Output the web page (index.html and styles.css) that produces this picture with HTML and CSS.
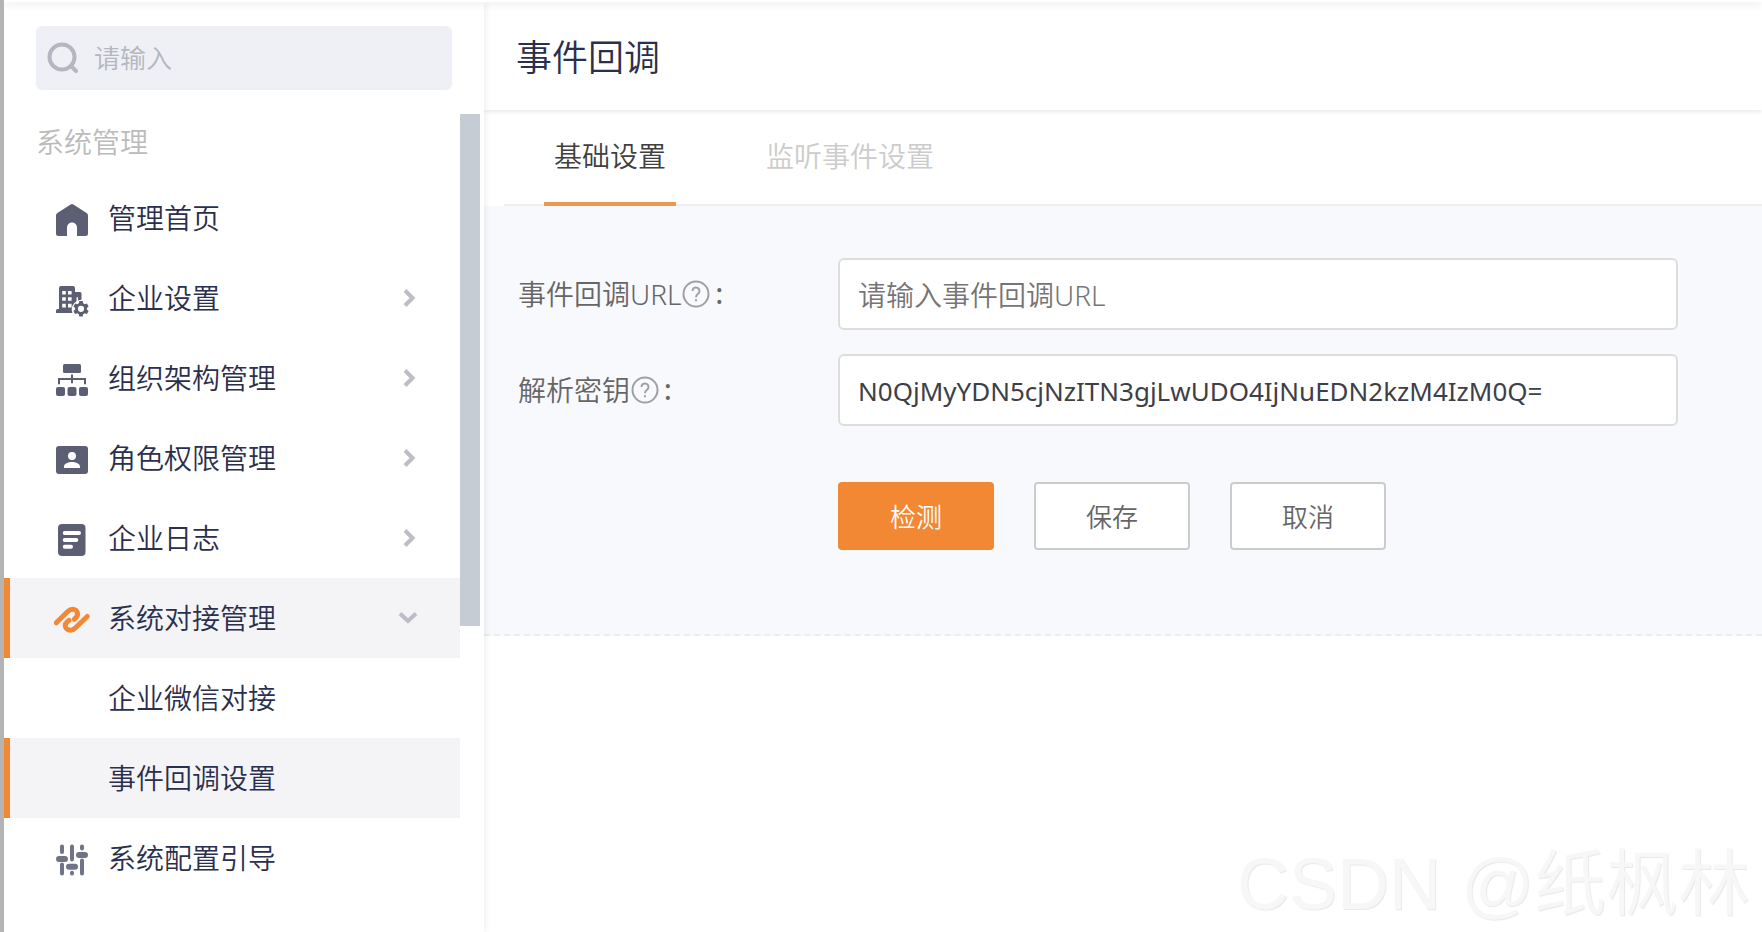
FILE: index.html
```html
<!DOCTYPE html>
<html lang="zh-CN">
<head>
<meta charset="utf-8">
<meta name="viewport" content="width=device-width, initial-scale=1">
<title>事件回调</title>
<link rel="stylesheet" href="styles.css">
</head>
<body>
<div class="topbar"></div>
<div class="layout">
  <aside class="sidebar">
    <label class="search">
      <svg class="search-icon" viewBox="0 0 32 32" aria-hidden="true"><circle cx="15" cy="15" r="12.5"/><path d="M24 24l5 5"/></svg>
      <input class="search-input" type="text" placeholder="请输入" aria-label="搜索">
    </label>
    <div class="nav-scroll">
      <nav class="nav">
        <h2 class="nav-title">系统管理</h2>
        <a class="nav-item" href="#home">
          <svg class="nav-icon" viewBox="0 0 32 32" aria-hidden="true"><path fill-rule="evenodd" d="M14.6.5a2.6 2.6 0 0 1 2.8 0L30.6 9A3 3 0 0 1 32 11.500V29.500A2.500 2.500 0 0 1 29.500 32H21V23.500a5 5 0 0 0-10 0V32H2.500A2.500 2.500 0 0 1 0 29.500V11.500A3 3 0 0 1 1.400 9Z"/></svg>
          <span class="nav-text">管理首页</span>
        </a>
        <a class="nav-item" href="#company">
          <svg class="nav-icon" viewBox="0 0 32 32" aria-hidden="true">
            <path fill-rule="evenodd" d="M5 2H17a2 2 0 0 1 2 2V8h5a1.500 1.500 0 0 1 1.500 1.500V15.800a9 9 0 0 0-3.500.6V13.200H20.500V17.300A9 9 0 0 0 16.500 28.900H0V26.500A1.500 1.500 0 0 1 1.500 25H3V4a2 2 0 0 1 2-2ZM6.200 7v3.600h3.600V7ZM12 7v3.600h3.600V7ZM6.200 13.200v3.600h3.600v-3.600ZM12 13.200v3.600h3.600v-3.600ZM6.200 19.800v3.600h3.600v-3.600ZM12 19.800v3.600h3.600v-3.600Z"/>
            <path fill-rule="evenodd" d="M23.300 18h3.400l.5 2.300 1.500.9 2.200-.7 1.700 2.900-1.700 1.500v1.700l1.700 1.500-1.700 2.900-2.200-.7-1.500.9-.5 2.300h-3.400l-.5-2.300-1.500-.9-2.200.7-1.700-2.900 1.700-1.500v-1.700l-1.700-1.500 1.700-2.900 2.200.7 1.500-.9ZM25 22.700a3.100 3.100 0 1 0 0 6.200a3.100 3.100 0 0 0 0-6.200Z" transform="translate(0 -1)"/>
          </svg>
          <span class="nav-text">企业设置</span>
          <svg class="chevron" viewBox="0 0 20 20" aria-hidden="true"><path d="M5 2.500L12.500 10l-7.500 7.500"/></svg>
        </a>
        <a class="nav-item" href="#org">
          <svg class="nav-icon" viewBox="0 0 32 32" aria-hidden="true">
            <rect x="7" y="0" width="18" height="9" rx="1.500"/>
            <path d="M15 10.500h2V14H30v6.200H28V16H17v3.200H15V16H4v4.200H2V14H15Z"/>
            <rect x="0" y="23" width="9" height="9" rx="2"/><rect x="11.500" y="23" width="9" height="9" rx="2"/><rect x="23" y="23" width="9" height="9" rx="2"/>
          </svg>
          <span class="nav-text">组织架构管理</span>
          <svg class="chevron" viewBox="0 0 20 20" aria-hidden="true"><path d="M5 2.500L12.500 10l-7.500 7.500"/></svg>
        </a>
        <a class="nav-item" href="#roles">
          <svg class="nav-icon" viewBox="0 0 32 32" aria-hidden="true"><path fill-rule="evenodd" d="M3 2H29a3 3 0 0 1 3 3V27a3 3 0 0 1-3 3H3a3 3 0 0 1-3-3V5a3 3 0 0 1 3-3ZM16 8a4 4 0 1 0 0 8a4 4 0 0 0 0-8ZM8 24h16v-1.500c0-3-4.500-4.500-8-4.500s-8 1.500-8 4.500Z"/></svg>
          <span class="nav-text">角色权限管理</span>
          <svg class="chevron" viewBox="0 0 20 20" aria-hidden="true"><path d="M5 2.500L12.500 10l-7.500 7.500"/></svg>
        </a>
        <a class="nav-item" href="#log">
          <svg class="nav-icon" viewBox="0 0 32 32" aria-hidden="true"><rect x="2" y="0" width="27.500" height="32" rx="4"/><path class="icon-lines" d="M8.700 9H23M8.700 16H20.300M8.700 22.800H15"/></svg>
          <span class="nav-text">企业日志</span>
          <svg class="chevron" viewBox="0 0 20 20" aria-hidden="true"><path d="M5 2.500L12.500 10l-7.500 7.500"/></svg>
        </a>
        <a class="nav-item nav-item-active" href="#integration">
          <svg class="nav-icon nav-icon-link" viewBox="0 0 32 32" aria-hidden="true"><path d="M.3 18.800L12 7.300C15.500 4 20.500 5 21.500 9C22.200 12 20.500 13.500 18.300 15.300M31.200 12.500L19.300 24C16 27.500 10.800 26.500 9.500 23C8.500 20 10 18.300 13 16.300"/></svg>
          <span class="nav-text">系统对接管理</span>
          <svg class="chevron" viewBox="0 0 20 20" aria-hidden="true"><path d="M0 5.500L8 13l8-7.500"/></svg>
        </a>
        <a class="nav-item nav-item-sub" href="#wecom"><span class="nav-text">企业微信对接</span></a>
        <a class="nav-item nav-item-sub nav-item-active" href="#callback" aria-current="page"><span class="nav-text">事件回调设置</span></a>
        <a class="nav-item" href="#guide">
          <svg class="nav-icon nav-icon-sliders" viewBox="0 0 32 32" aria-hidden="true"><path class="thin" d="M6 2.500V8M6 20.500V29.500M16 2.500V15.500M16 28.800V29.500M26 2.500V4.500M26 16.500V29.500"/><path class="thick" d="M3 15H9M13 22.700H19M23 11H29"/></svg>
          <span class="nav-text">系统配置引导</span>
        </a>
      </nav>
      <div class="scroll-track"><div class="scroll-thumb"></div></div>
    </div>
  </aside>
  <main class="main">
    <header class="page-header"><h1 class="page-title">事件回调</h1></header>
    <div class="tabs" role="tablist">
      <button class="tab tab-active" type="button" role="tab" aria-selected="true">基础设置</button>
      <button class="tab" type="button" role="tab" aria-selected="false">监听事件设置</button>
    </div>
    <form class="panel">
      <div class="form-row">
        <label class="form-label" for="url">事件回调URL<svg class="help" viewBox="0 0 28 28" aria-hidden="true"><circle cx="14" cy="14" r="12.500"/><path d="M10.500 11a3.500 3.500 0 1 1 5.500 2.800c-1.300 1-2 1.600-2 3.500M14 19.200v2"/></svg><span class="colon">:</span></label>
        <input class="form-input" id="url" type="text" placeholder="请输入事件回调URL">
      </div>
      <div class="form-row">
        <label class="form-label" for="key">解析密钥<svg class="help" viewBox="0 0 28 28" aria-hidden="true"><circle cx="14" cy="14" r="12.500"/><path d="M10.500 11a3.500 3.500 0 1 1 5.500 2.800c-1.300 1-2 1.600-2 3.500M14 19.200v2"/></svg><span class="colon">:</span></label>
        <input class="form-input form-input-key" id="key" type="text" value="N0QjMyYDN5cjNzITN3gjLwUDO4IjNuEDN2kzM4IzM0Q=">
      </div>
      <div class="actions">
        <button class="btn btn-primary" type="button">检测</button>
        <button class="btn" type="button">保存</button>
        <button class="btn" type="button">取消</button>
      </div>
    </form>
  </main>
</div>
<div class="watermark">CSDN @纸枫林</div>
</body>
</html>
```
FILE: styles.css
```css
* { box-sizing: border-box; }

body {
  margin: 0;
  min-height: 100vh;
  display: flex;
  flex-direction: column;
  border-left: 4px solid #b4b4b4;
  background: #fff;
  color: #2a2f4d;
  font-family: "Noto Sans", "Noto Sans CJK SC", sans-serif;
  font-size: 28px;
  font-weight: 350;
}

input, button { font: inherit; }
h1, h2 { margin: 0; font-weight: inherit; }

.topbar {
  position: relative;
  z-index: 2;
  height: 2px;
  background: #fff;
  box-shadow: 0 1px 8px rgba(0, 0, 0, 0.2);
}

.layout { flex: 1; display: flex; }

.sidebar {
  position: relative;
  z-index: 1;
  flex: none;
  width: 480px;
  padding-top: 24px;
  background: #fff;
  box-shadow: 0 0 8px rgba(0, 0, 0, 0.1);
}

.search {
  display: flex;
  align-items: center;
  gap: 15px;
  height: 64px;
  margin: 0 32px;
  padding: 0 11px;
  border-radius: 6px;
  background: #eff0f5;
}

.search-icon {
  flex: none;
  width: 32px;
  height: 32px;
  fill: none;
  stroke: #b4b6c0;
  stroke-width: 4;
  stroke-linecap: round;
}

.search-input {
  flex: 1;
  min-width: 0;
  padding: 0;
  border: 0;
  outline: 0;
  background: none;
  font-size: 26px;
}
.search-input::placeholder { color: #b4b6c0; opacity: 1; }

.nav-scroll { display: flex; margin-top: 24px; padding-right: 4px; }
.nav { flex: 1; }
.nav-title {
  height: 64px;
  padding-left: 32px;
  color: #bbb;
  font-size: 28px;
  line-height: 56px;
}

.nav-item {
  display: flex;
  align-items: center;
  height: 80px;
  padding: 0 40px 0 46px;
  border-left: 6px solid transparent;
  color: inherit;
  line-height: 40px;
  text-decoration: none;
}
.nav-item-active { border-left-color: #f28734; background: #f4f4f7; }
.nav-item-sub { padding-left: 98px; }
.nav-text { flex: 1; }

.nav-icon {
  flex: none;
  width: 32px;
  height: 32px;
  margin-top: 4px;
  margin-right: 20px;
  overflow: visible;
  fill: #5c5f73;
}
.icon-lines { fill: none; stroke: #fff; stroke-width: 4; stroke-linecap: round; }
.nav-icon-link { fill: none; stroke: #f28734; stroke-width: 5; stroke-linecap: round; }
.nav-icon-sliders { fill: none; stroke: #717487; stroke-linecap: round; }
.thin { stroke-width: 4; }
.thick { stroke-width: 6; }

.chevron {
  flex: none;
  width: 20px;
  height: 20px;
  overflow: visible;
  fill: none;
  stroke: #bcbdc6;
  stroke-width: 4;
}

.scroll-track { width: 20px; }
.scroll-thumb { height: 512px; background: #c5ccd4; }

.main { flex: 1; min-width: 0; }

.page-header {
  position: relative;
  height: 108px;
  padding-left: 32px;
  box-shadow: 0 1px 5px rgba(0, 0, 0, 0.12);
}
.page-title { font-size: 36px; line-height: 112px; }

.tabs {
  display: flex;
  gap: 80px;
  height: 96px;
  margin-left: 20px;
  padding-left: 40px;
  border-bottom: 2px solid #eee;
}
.tab {
  height: 96px;
  padding: 0 10px 2px;
  border: 0;
  border-bottom: 4px solid transparent;
  background: none;
  color: #ccc;
}
.tab-active { border-bottom-color: #ee9750; color: #404040; }

.panel {
  display: flex;
  flex-direction: column;
  gap: 24px;
  padding: 52px 84px 84px 34px;
  border-bottom: 2px dashed #ededf0;
  background: #f8f9fd;
}
.form-row { display: flex; align-items: center; }
.form-label {
  flex: none;
  display: flex;
  align-items: center;
  width: 320px;
  padding-bottom: 2px;
  color: #666;
}
.help {
  width: 28px;
  height: 28px;
  margin: 2px 5px 0 1px;
  fill: none;
  stroke: #a0a0a0;
  stroke-width: 2;
}
.colon { font-weight: 500; }
.form-input {
  flex: 1;
  min-width: 0;
  height: 72px;
  padding: 2px 18px 0;
  border: 2px solid #ddd;
  border-radius: 6px;
  background: #fff;
  color: #3d4048;
}
.form-input::placeholder { color: #757575; opacity: 1; }
.form-input-key { font-size: 26px; font-weight: 400; }

.actions {
  display: flex;
  gap: 40px;
  margin-top: 32px;
  padding-left: 320px;
}
.btn {
  width: 156px;
  height: 68px;
  border: 2px solid #ccc;
  border-radius: 4px;
  background: #fff;
  color: #666;
  font-size: 26px;
}
.btn-primary { border-color: #f28734; background: #f28734; color: #fff; }

.watermark {
  position: fixed;
  right: 12px;
  bottom: 0;
  color: #f7f7f7;
  font-family: "Liberation Sans", "Noto Sans CJK SC", sans-serif;
  font-size: 72px;
  font-weight: 350;
  line-height: 96px;
  text-shadow: 1px 1px 1px #e8e8e8;
  pointer-events: none;
}
```
